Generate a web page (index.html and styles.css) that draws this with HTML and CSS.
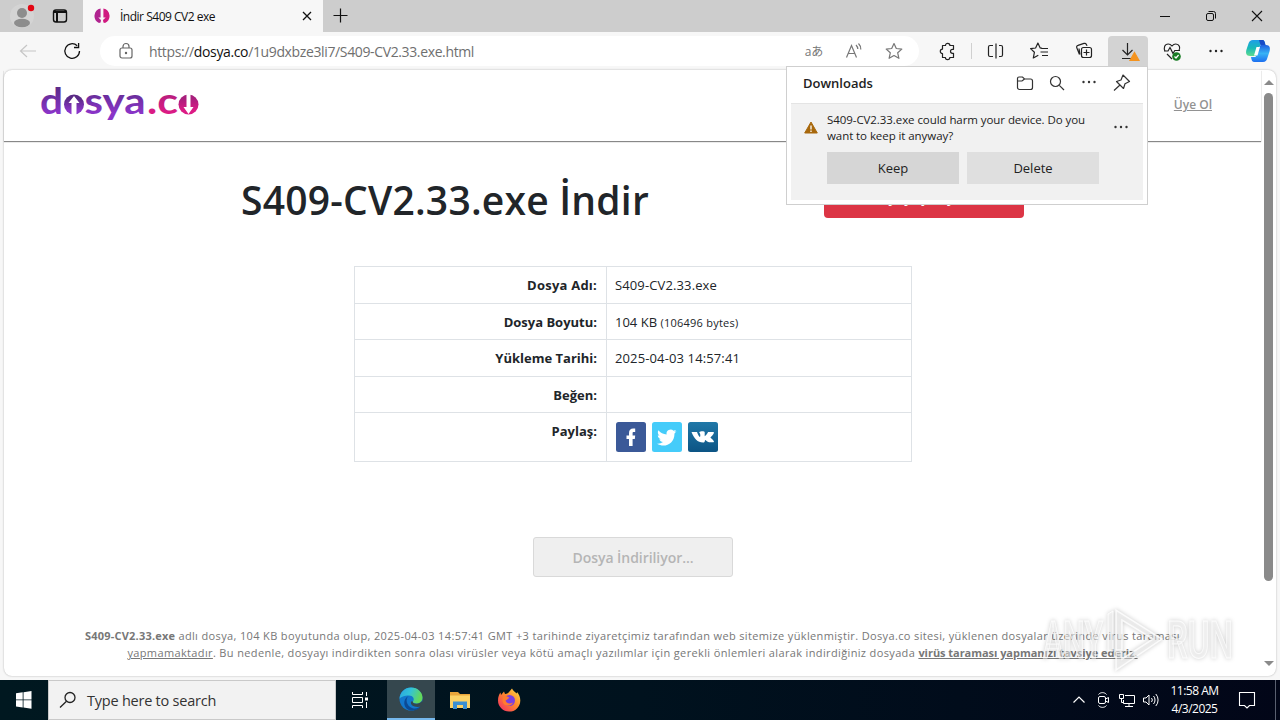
FILE: index.html
```html
<!DOCTYPE html>
<html lang="tr">
<head>
  <meta charset="UTF-8" />
  <title>İndir S409 CV2 exe</title>
  <link rel="stylesheet" href="styles.css">
</head>
<body>

  <div class="tab-bar">
    <div class="profile">
      <svg width="44" height="32" viewBox="0 0 44 32">
        <circle cx="22" cy="16" r="12" fill="#d4d4d4"/>
        <circle cx="22" cy="13" r="5" fill="#8d8d8d"/>
        <ellipse cx="22" cy="23" rx="8" ry="4.2" fill="#8d8d8d"/>
        <circle cx="31" cy="8" r="3.2" fill="#e30613"/>
      </svg>
      <svg width="32" height="32" viewBox="0 0 32 32" fill="none" stroke="#111" stroke-width="1.4">
        <rect x="9.5" y="10" width="13" height="12" rx="2.5"/>
        <path d="M9.5 12h13M13 13v9" stroke-width="2"/>
      </svg>
    </div>
    <div class="tab">
      <svg width="16" height="16" viewBox="0 0 16 16">
        <path d="M6.6 .6A7.6 7.6 0 0 0 5 15l1.6-.5L7 12 4.3 9.500H6.600z" fill="#b0238f"/>
        <path d="M9.400 .6A7.600 7.600 0 0 1 11 15l-1.600-.5L9 12l2.700-2.500H9.400z" fill="#d01a80"/>
      </svg>
      <span class="tab-title">İndir S409 CV2 exe</span>
      <svg width="12" height="12" viewBox="0 0 12 12" stroke="#111" stroke-width="1.3"><path d="M2 2l8 8M10 2l-8 8"/></svg>
    </div>
    <svg width="34" height="32" viewBox="0 0 34 32" stroke="#111" stroke-width="1.2"><path d="M10.500 15.500h14M17.500 8.500v14"/></svg>
    <div class="window-buttons">
      <svg width="46" height="32" viewBox="0 0 46 32" stroke="#111"><path d="M18 16.500h10"/></svg>
      <svg width="46" height="32" viewBox="0 0 46 32" fill="none" stroke="#111"><rect x="18.500" y="13.500" width="7" height="7" rx="1.500"/><path d="M20.500 11.500h5a2 2 0 0 1 2 2v5"/></svg>
      <svg width="46" height="32" viewBox="0 0 46 32" stroke="#111" stroke-width="1.1"><path d="M18 11l10 10M28 11l-10 10"/></svg>
    </div>
  </div>

  <div class="toolbar">
    <svg width="50" height="32" viewBox="0 0 50 32" fill="none" stroke="#c6c6c6" stroke-width="1.2"><path d="M36 16H21M27 10l-6.500 6 6.500 6"/></svg>
    <svg class="reload" width="44" height="32" viewBox="0 0 44 32" fill="none" stroke="#111" stroke-width="1.3"><path d="M29.500 16a7.300 7.300 0 1 1-2.300-5.300M28.600 8v4.500H24"/></svg>
    <div class="address">
      <svg width="16" height="18" viewBox="0 0 16 18" fill="none" stroke="#666" stroke-width="1.2"><rect x="2" y="6" width="12" height="10" rx="2"/><path d="M5 6V4.500a3 3 0 0 1 6 0V6"/><circle cx="8" cy="11" r=".6" fill="#666"/></svg>
      <span class="url">https://<b>dosya.co</b>/1u9dxbze3li7/S409-CV2.33.exe.html</span>
      <span class="translate">aあ</span>
      <svg width="40" height="30" viewBox="0 0 40 30" fill="none" stroke="#777" stroke-width="1.2"><path d="M12.500 21.500L17.500 9.500l5 12M14.300 17.500h6.500M22 9a6 6 0 0 1 1.800 4M24.500 7.500a8 8 0 0 1 2.300 6"/></svg>
      <svg width="40" height="30" viewBox="0 0 40 30" fill="none" stroke="#777" stroke-width="1.2" stroke-linejoin="round"><path d="M20 7.500l2.300 5 5.500.6-4.100 3.700 1.200 5.500-4.900-2.800-4.900 2.800 1.200-5.500-4.100-3.700 5.500-.6z"/></svg>
    </div>
    <div class="tools">
      <svg width="44" height="30" viewBox="0 0 44 30" fill="none" stroke="#222" stroke-width="1.2"><path d="M17.500 9.500h3a2.200 2.200 0 0 1 4.400 0h3.600v3.800h-1a2 2 0 0 0 0 4h1v4.200H24.800a2.200 2.200 0 0 1-4.400 0h-2.900v-4a2.200 2.200 0 0 1 0-4.400z" stroke-linejoin="round"/></svg>
      <span class="separator"></span>
      <svg width="44" height="30" viewBox="0 0 44 30" fill="none" stroke="#222" stroke-width="1.2"><path d="M19 9.500h-3a1.500 1.500 0 0 0-1.500 1.500v8a1.500 1.500 0 0 0 1.500 1.500h3M25 9.500h2a1.500 1.500 0 0 1 1.500 1.500v8a1.500 1.500 0 0 1-1.500 1.500h-2M22 7.500v15"/></svg>
      <svg width="44" height="30" viewBox="0 0 44 30" fill="none" stroke="#222" stroke-width="1.2" stroke-linejoin="round"><path d="M24 12.300l-1.800-.4-2.300-4.900-2.300 5-5 .6 3.800 3.700-1.100 5.700 5-2.800M23.500 12.500H30M22.500 16H30M24 19.500h6"/></svg>
      <svg width="44" height="30" viewBox="0 0 44 30" fill="none" stroke="#222" stroke-width="1.2"><rect x="19.500" y="11.500" width="10" height="10" rx="2"/><path d="M17.500 18.500l-2.700-6.800c-.5-1 .1-2 1.200-2.300l6-2c1-.3 2 .2 2.400 1l.6 1.500M17 12.500l1 6M24.500 13.500v6M21.500 16.500h6"/></svg>
      <span class="tool"><svg width="40" height="30" viewBox="0 0 40 30" fill="none" stroke="#222" stroke-width="1.2"><path d="M19.500 7v12M14.500 14l5 5 5-5M14 22.500h9"/><path d="M26.500 16.500l4.500 8h-9z" fill="#f4931e" stroke="#f4931e"/></svg></span>
      <svg width="44" height="30" viewBox="0 0 44 30" fill="none" stroke="#222" stroke-width="1.2"><path d="M15 15c-1.500-3-.5-7 3.200-7 2 0 3 1 3.800 2 .8-1 1.800-2 3.800-2 3.700 0 4.700 4 3.200 6.500M14 15h4l2-3.500 3 6 1.800-3H30M17 18l5 5"/><circle cx="26.500" cy="20.500" r="4.300" fill="#187c24" stroke="none"/><path d="M24.500 20.500l1.500 1.500 2.600-3" stroke="#fff"/></svg>
      <svg width="44" height="30" viewBox="0 0 44 30" fill="#222"><circle cx="16.500" cy="15" r="1.200"/><circle cx="22" cy="15" r="1.200"/><circle cx="27.500" cy="15" r="1.200"/></svg>
      <svg class="copilot" width="26" height="26" viewBox="0 0 26 26">
        <defs>
          <linearGradient id="cp1" x1="0" y1="0" x2="0" y2="1"><stop offset="0" stop-color="#1f9ee8"/><stop offset=".5" stop-color="#18b9b8"/><stop offset="1" stop-color="#5fdc8e"/></linearGradient>
          <linearGradient id="cp2" x1="0" y1="0" x2="0" y2="1"><stop offset="0" stop-color="#1f5fe0"/><stop offset=".5" stop-color="#37b3f5"/><stop offset="1" stop-color="#1d6ff0"/></linearGradient>
        </defs>
        <path d="M8 2h9c2.500 0 2.800 2 3.500 5l-5-.5L11 18H5c-4 0-4.500-3-3.500-6.500l2-6C4.300 3.300 5.500 2 8 2z" fill="url(#cp1)"/>
        <path d="M14 2h3c2.500 0 2.800 2 3.500 5h-5z" fill="#174ac7"/>
        <path d="M18 24H9.500c-2.500 0-3-2-3.500-5h4.500L15.500 7H21c4 0 4.500 3 3.500 6.500l-2.300 7C21.500 22.700 20.500 24 18 24z" fill="url(#cp2)"/>
        <path d="M11.500 9h3.500l-2.500 8.500H9z" fill="#fff"/>
      </svg>
    </div>
  </div>

  <div class="viewport">
    <div class="page">
      <div class="header">
        <svg class="logo" width="162" height="52" viewBox="0 0 162 52">
          <defs>
            <linearGradient id="lg" x1="0" y1="0" x2="0" y2="1"><stop offset="0.2" stop-color="#5a2a86"/><stop offset="0.8" stop-color="#8a35c8"/></linearGradient>
            <linearGradient id="lg2" x1="0" y1="0" x2="0" y2="1"><stop offset="0.2" stop-color="#a81f7c"/><stop offset="0.8" stop-color="#dc1b85"/></linearGradient>
          </defs>
          <text x="-1" y="36" textLength="23" lengthAdjust="spacingAndGlyphs" fill="url(#lg)">d</text>
          <circle cx="33" cy="26.500" r="10" fill="url(#lg)"/>
          <path d="M33 18l5.500 7h-3v12h-5V25h-3z" fill="#fff"/>
          <text x="43.500" y="36" textLength="61" lengthAdjust="spacingAndGlyphs" fill="url(#lg)">sya</text>
          <text x="106" y="36" textLength="31" lengthAdjust="spacingAndGlyphs" fill="url(#lg2)">.c</text>
          <circle cx="147.500" cy="26.500" r="10" fill="url(#lg2)"/>
          <path d="M147.500 36l-5-7h3V16h4v13h3z" fill="#fff"/>
        </svg>
        <a class="signup">Üye Ol</a>
      </div>

      <div class="title-row">
        <h1>S409-CV2.33.exe İndir</h1>
        <div class="report">Dosyayı Şikayet Et</div>
      </div>

      <table class="details">
        <tr><th class="s2">Dosya Adı:</th><td class="s1">S409-CV2.33.exe</td></tr>
        <tr><th>Dosya Boyutu:</th><td>104 KB <small>(106496 bytes)</small></td></tr>
        <tr><th>Yükleme Tarihi:</th><td class="s1">2025-04-03 14:57:41</td></tr>
        <tr><th>Beğen:</th><td></td></tr>
        <tr class="share">
          <th>Paylaş:</th>
          <td>
            <div class="social">
              <svg width="30" height="30" viewBox="0 0 30 30"><rect width="30" height="30" rx="2.500" fill="#3b5998"/><path d="M13 24v-7h-2.500v-3.500H13v-2.300C13 8 14.500 6.500 17.200 6.500h2v3.400h-1.400c-1 0-1.200.5-1.200 1.400v2.200h2.600L18.800 17h-2.200v7z" fill="#fff"/></svg>
              <svg width="30" height="30" viewBox="0 0 30 30"><rect width="30" height="30" rx="2.500" fill="#45ccfa"/><path d="M24.500 9.300l-2.200.6c.8-.5 1.300-1.200 1.600-2l-2.400.9a4.100 4.100 0 0 0-6.900 3.700c-3.300-.2-6.200-1.700-8.200-4.200-1.200 2.200-.4 4.300 1.200 5.400l-1.800-.5c0 2 1.400 3.600 3.200 4l-1.700.1c.5 1.600 2 2.700 3.700 2.800A8.500 8.500 0 0 1 5 21.800c7.500 4.500 17.500.5 17.500-10.300z" fill="#fff"/></svg>
              <svg width="30" height="30" viewBox="0 0 30 30"><defs><linearGradient id="vk" x1="0" y1="0" x2="0" y2="1"><stop offset="0" stop-color="#2078a8"/><stop offset="1" stop-color="#0c5484"/></linearGradient></defs><rect width="30" height="30" rx="2.500" fill="url(#vk)"/><path d="M3.500 10H9c.8 2.500 2 4.600 3 5 .6-.8.500-3.500-.8-4.500 1.200-1.500 5.300-1.400 5.500-.3v4c1.200-.5 2.600-2.500 3.400-4.200h5.300c1.500.4-.4 3.200-3 5.500 2.800 2.400 4.600 4.500 3 4.800h-4.400c-1.800-.3-2.700-2-3.700-2.300-.8.300 0 2.300-1.500 2.400C9.500 20.700 6.500 17 3.500 10z" fill="#fff"/></svg>
            </div>
          </td>
        </tr>
      </table>

      <div class="download-btn">Dosya İndiriliyor...</div>

      <div class="notice">
        <div><b>S409-CV2.33.exe</b> adlı dosya, 104 KB boyutunda olup, 2025-04-03 14:57:41 GMT +3 tarihinde ziyaretçimiz tarafından web sitemize yüklenmiştir. Dosya.co sitesi, yüklenen dosyalar üzerinde virus taraması</div>
        <div><u>yapmamaktadır</u>. Bu nedenle, dosyayı indirdikten sonra olası virüsler veya kötü amaçlı yazılımlar için gerekli önlemleri alarak indirdiğiniz dosyada <u class="advice">virüs taraması yapmanızı tavsiye ederiz.</u></div>
      </div>
    </div>
    <div class="scrollbar">
      <span class="arrow-up"></span>
      <span class="thumb"></span>
      <span class="arrow-down"></span>
    </div>
  </div>

  <div class="downloads">
    <div class="downloads-head">
      <span class="downloads-title">Downloads</span>
      <svg width="32" height="32" viewBox="0 0 32 32" fill="none" stroke="#333" stroke-width="1.2"><path d="M8.500 11.500a1.500 1.500 0 0 1 1.500-1.500h3.500l2 2h6a2 2 0 0 1 2 2v6.500a2 2 0 0 1-2 2h-11a2 2 0 0 1-2-2zM8.500 14H13l2.500-2"/></svg>
      <svg width="32" height="32" viewBox="0 0 32 32" fill="none" stroke="#333" stroke-width="1.2"><circle cx="14.500" cy="14.500" r="5"/><path d="M18.300 18.300L23 23"/></svg>
      <svg width="32" height="32" viewBox="0 0 32 32" fill="#333"><circle cx="10.500" cy="15" r="1.200"/><circle cx="16" cy="15" r="1.200"/><circle cx="21.500" cy="15" r="1.200"/></svg>
      <svg width="34" height="32" viewBox="0 0 34 32" fill="none" stroke="#333" stroke-width="1.200" stroke-linejoin="round"><path d="M18 8l6.500 6.500-4.500 2.200-1.500 4.800-7-7 4.500-1.500zM15 18l-6 5.500"/></svg>
    </div>
    <div class="downloads-item">
      <svg class="warn" width="14" height="13" viewBox="0 0 14 13"><path d="M7 1l6.300 11H.7z" fill="#a8680c" stroke="#a8680c" stroke-linejoin="round"/><path d="M7 4.500v4M7 9.500V11" stroke="#fff" stroke-width="1.3"/></svg>
      <div class="message">S409-CV2.33.exe could harm your device. Do you<br>want to keep it anyway?</div>
      <svg class="more" width="16" height="6" viewBox="0 0 16 6" fill="#333"><circle cx="2.500" cy="3" r="1.200"/><circle cx="8" cy="3" r="1.200"/><circle cx="13.500" cy="3" r="1.200"/></svg>
      <div class="choices"><span class="keep">Keep</span><span class="delete">Delete</span></div>
    </div>
  </div>

  <svg class="watermark" width="200" height="74" viewBox="0 0 200 74">
    <g fill="#fff" fill-opacity=".45" stroke="#fff" stroke-opacity=".8">
      <text x="5" y="54" textLength="60" lengthAdjust="spacingAndGlyphs">ANY</text>
      <text x="129" y="54" textLength="66" lengthAdjust="spacingAndGlyphs">RUN</text>
      <path d="M78 12V6l46 29-46 31V48h6v7l31-20-31-19v30h-6z" stroke-width="1.5"/>
      <path d="M70 10l5-3v40h-5z"/>
    </g>
  </svg>

  <div class="taskbar">
    <svg width="48" height="40" viewBox="0 0 48 40" fill="#fff"><path d="M16 13.200l6.700-.9v7.200H16zM23.500 12.200l8-1.100v8.400h-8zM16 20.300h6.700v7.200l-6.700-.9zM23.500 20.300h8v8.400l-8-1.100z"/></svg>
    <div class="search">
      <svg width="20" height="20" viewBox="0 0 20 20" fill="none" stroke="#222" stroke-width="1.3"><circle cx="11" cy="7.500" r="5"/><path d="M7.500 11.200L1 17.500"/></svg>
      <span class="search-text">Type here to search</span>
    </div>
    <svg width="51" height="40" viewBox="0 0 51 40" fill="none" stroke="#fff"><path d="M16.500 12v2.500h10V12M16.500 28v-2.500h10V28M16.500 17.500h10v5h-10zM30.500 12v4M30.500 22v6"/><rect x="29.500" y="18" width="2" height="2" fill="#fff"/></svg>
    <span class="task active">
      <svg width="24" height="24" viewBox="0 0 24 24">
        <defs><linearGradient id="eg" x1="0" y1="0" x2="1" y2=".3"><stop offset="0" stop-color="#2aa4e0"/><stop offset=".5" stop-color="#33c3d8"/><stop offset="1" stop-color="#63d95a"/></linearGradient></defs>
        <circle cx="12" cy="12" r="11.500" fill="#1377cc"/>
        <path d="M.5 12C1 5 6 .5 12 .5c7 0 11.500 5 11.500 10 0 4-3 6-6 6-2.500 0-4-1-3.500-2 2-2.500 0-6-4-6-4.500 0-8.500 1.500-9.500 3.500z" fill="url(#eg)"/>
        <path d="M9.500 9C6 12 7.500 19 13 21c3.500 1.200 6.500.2 9-2-2 3.500-6 5-10 4.500C4 22.500 3 12 9.500 9z" fill="#0c4a94"/>
        <path d="M14 14.500c-.8 1.200 1 2.300 3.500 2.200 2 0 4-.8 5.500-2.700l1 3.500-2 2c-6 1.500-11-1-10-5z" fill="#35474e"/>
      </svg>
    </span>
    <span class="task"><svg width="22" height="20" viewBox="0 0 22 20"><path d="M1 2h8l2 2h10v14H1z" fill="#e9a53a"/><path d="M1 5.500h20V18H1z" fill="#fcd266"/><path d="M4 19v-7.500h14V19h-4v-4H8v4z" fill="#3b8fd2"/><path d="M8 15h6v3H8z" fill="#fcd266"/></svg></span>
    <span class="task"><svg width="24" height="24" viewBox="0 0 24 24">
      <defs><linearGradient id="ff" x1="1" y1="0" x2="0" y2="1"><stop offset="0" stop-color="#ffe14a"/><stop offset=".45" stop-color="#ff8a2a"/><stop offset="1" stop-color="#f0256a"/></linearGradient></defs>
      <path d="M15 .5c1 2.500 3 3 4.500 5 .5-.5.600-1 .5-1.500 2 2 3.300 5 3.300 8.500A11.200 11.200 0 0 1 12 23.600 11.200 11.200 0 0 1 1 12.500C1 9 2 6.500 3.500 4.500L4 7l3-3.500L8 6c3 0 4.500-2.500 7-5.500z" fill="url(#ff)"/>
      <circle cx="12.500" cy="12.500" r="5.500" fill="#7a3fe0"/><path d="M6 8.500c3-1.500 5 0 6.500 1.500-2 .5-2 2-4 2.500 1 3.500 5 3.500 7.500 2-1 4-10 5-10.500-2z" fill="#ff7b2e"/>
    </svg></span>
    <div class="tray">
      <svg width="24" height="24" viewBox="0 0 24 24" fill="none" stroke="#fff" stroke-width="1.2"><path d="M6.500 14.500L12 9l5.500 5.500"/></svg>
      <svg width="24" height="24" viewBox="0 0 24 24" fill="none" stroke="#fff"><rect x="7.500" y="8.500" width="7" height="7" rx="1.500"/><path d="M14.500 11l3-1.500v5l-3-1.500M7.500 6.500c2-2.500 6-2.500 8 0M7.500 17.500c2 2.500 6 2.500 8 0"/></svg>
      <svg width="24" height="24" viewBox="0 0 24 24" fill="none" stroke="#fff"><path d="M10 7.500h9.500v8H8.500V12M14 15.500v3M10 18.500h8M4.500 6.500h4v4h-4zM6.500 10.500v4h2"/></svg>
      <svg width="24" height="24" viewBox="0 0 24 24" fill="none" stroke="#fff"><path d="M4.500 10h2.500l3-3v10l-3-3H4.500zM12.500 10a3 3 0 0 1 0 4M14.500 8a6 6 0 0 1 0 8M16.800 6a9 9 0 0 1 0 12"/></svg>
      <div class="clock">11:58 AM<br>4/3/2025</div>
      <svg width="48" height="40" viewBox="0 0 48 40" fill="none" stroke="#fff" stroke-width="1.1"><path d="M16.500 12.500h15v13h-5l-2.500 2.500-2.500-2.500h-5z"/></svg>
      <span class="show-desktop"></span>
    </div>
  </div>

</body>
</html>
```
FILE: styles.css
```css
* {
  box-sizing: border-box;
}
body {
  margin: 0;
  width: 1280px;
  height: 720px;
  overflow: hidden;
  display: flex;
  flex-direction: column;
  position: relative;
  background: #f7f7f7;
  font-family: "Open Sans", "Noto Sans", sans-serif;
  color: #212529;
}
svg {
  display: block;
  flex-shrink: 0;
}
.tab-bar {
  display: flex;
  height: 32px;
  background: #cdcdcd;
}
.profile {
  display: flex;
  width: 83px;
}
.tab {
  display: flex;
  align-items: center;
  width: 240px;
  padding: 0 10px 0 11px;
  background: #f7f7f7;
}
.tab-title {
  flex: 1;
  margin-left: 10px;
  font-size: 12px;
  letter-spacing: -0.49px;
  color: #111;
  white-space: nowrap;
}
.window-buttons {
  display: flex;
  margin-left: auto;
}
.toolbar {
  display: flex;
  align-items: center;
  height: 38px;
}
.reload {
  margin-right: 6px;
}
.address {
  display: flex;
  align-items: center;
  width: 819px;
  height: 30px;
  padding: 0 5px 0 18px;
  border-radius: 15px;
  background: #fff;
}
.url {
  flex: 1;
  margin-left: 15px;
  font-size: 14px;
  letter-spacing: -0.367px;
  color: #6f6f6f;
  white-space: nowrap;
}
.url b {
  font-weight: 400;
  color: #111;
}
.translate {
  width: 40px;
  text-align: center;
  font-family: "Open Sans", "Noto Sans CJK JP", sans-serif;
  font-size: 12px;
  color: #777;
}
.tools {
  display: flex;
  align-items: center;
  margin-left: 6px;
}
.separator {
  width: 1px;
  height: 16px;
  margin: 0 2px;
  background: #d0d0d0;
}
.tool {
  width: 40px;
  height: 30px;
  margin: 0 2px;
  border-radius: 4px 4px 0 0;
  background: #d3d3d3;
}
.copilot {
  margin-left: 7px;
}
.viewport {
  display: flex;
  width: 1272px;
  height: 606px;
  margin: 0 4px 4px;
  background: #fff;
  border-radius: 8px;
  box-shadow: 0 0 2px rgba(0, 0, 0, 0.3);
}
.page {
  width: 1257px;
}
.header {
  display: flex;
  justify-content: space-between;
  height: 71px;
  padding: 8px 49px 0 37px;
  box-shadow: 0 1px 1px #888;
}
.logo {
  font-family: Lato, sans-serif;
  font-weight: 700;
  font-size: 37px;
}
.signup {
  margin-top: 19px;
  font-size: 12px;
  font-weight: 600;
  line-height: 16px;
  color: #929292;
  text-decoration: underline;
}
.title-row {
  display: flex;
  justify-content: space-between;
  align-items: flex-end;
  height: 77px;
  margin: 0 237px 48px;
}
h1 {
  margin: 0;
  font-size: 39px;
  line-height: 36px;
  font-weight: 600;
  letter-spacing: 0.22px;
  white-space: nowrap;
}
.report {
  width: 200px;
  height: 38px;
  border-radius: 4px;
  background: #dc3545;
  color: #fff;
  font-size: 14px;
  font-weight: 600;
  line-height: 35px;
  text-align: center;
}
.details {
  width: 558px;
  margin: 0 auto 0 350px;
  border-collapse: collapse;
  table-layout: fixed;
  font-size: 13px;
  line-height: 18px;
}
.details th, .details td {
  height: 36.5px;
  padding: 0 8px;
  border: 1px solid #dee2e6;
  text-align: left;
  white-space: nowrap;
}
.details th {
  width: 252px;
  padding-right: 9px;
  text-align: right;
}
.details tr:nth-child(even) th, .details tr:nth-child(even) td {
  padding-top: 2px;
}
.details .s1 {
  letter-spacing: 0.125px;
}
.details .s2 {
  letter-spacing: 0.23px;
}
.details small {
  font-size: 11px;
  letter-spacing: 0.24px;
}
.details .share th {
  height: 49px;
  padding-top: 9px;
  vertical-align: top;
}
.social {
  display: flex;
  gap: 6px;
  margin-left: 1px;
}
.download-btn {
  width: 200px;
  height: 40px;
  margin: 75px 0 0 529px;
  border: 1px solid #d9d9d9;
  border-radius: 3px;
  background: #efefef;
  color: #b5b5b5;
  font-size: 14px;
  font-weight: 600;
  letter-spacing: -0.05px;
  line-height: 39px;
  text-align: center;
}
.notice {
  margin-top: 50px;
  font-size: 11px;
  letter-spacing: 0.36px;
  line-height: 17px;
  color: #777;
  text-align: center;
  white-space: nowrap;
}
.notice b {
  letter-spacing: 0.2px;
}
.notice .advice {
  font-weight: 700;
  letter-spacing: -0.04px;
}
.scrollbar {
  display: flex;
  flex-direction: column;
  align-items: center;
  width: 15px;
  padding: 10px 0;
}
.arrow-up, .arrow-down {
  border: 5px solid transparent;
}
.arrow-up {
  border-top: 0;
  border-bottom-color: #8a8a8a;
}
.arrow-down {
  margin-top: auto;
  border-bottom: 0;
  border-top-color: #8a8a8a;
}
.thumb {
  width: 9px;
  height: 488px;
  margin-top: 8px;
  border-radius: 5px;
  background: #8a8a8a;
}
.downloads {
  position: absolute;
  left: 786px;
  top: 66px;
  width: 362px;
  height: 139px;
  border: 1px solid #cfcfcf;
  background: #fff;
}
.downloads-head {
  display: flex;
  align-items: center;
  height: 36px;
  padding: 0 8px 4px 16px;
}
.downloads-title {
  flex: 1;
  font-size: 13px;
  font-weight: 600;
  color: #222;
}
.downloads-item {
  display: grid;
  grid-template-columns: 36px 286px 1fr;
  grid-template-rows: 48px 32px;
  height: 97px;
  margin: 0 4px;
  border-top: 1px solid #e4e4e4;
  background: #f1f1f1;
}
.warn {
  margin: 17px 0 0 13px;
}
.message {
  padding-top: 8px;
  font-size: 11.5px;
  letter-spacing: -0.07px;
  line-height: 16px;
  color: #222;
  white-space: nowrap;
}
.more {
  margin-top: 20px;
}
.choices {
  grid-column: 2 / 4;
  display: flex;
  gap: 8px;
  font-size: 13px;
  line-height: 32px;
  text-align: center;
  color: #222;
}
.keep, .delete {
  width: 132px;
}
.keep {
  background: #d6d6d6;
}
.delete {
  background: #dfdfdf;
}
.watermark {
  position: absolute;
  left: 1038px;
  top: 604px;
  font-family: Roboto, sans-serif;
  font-weight: 500;
  font-size: 51px;
  filter: drop-shadow(0 0 2px rgba(0, 0, 0, 0.3));
}
.taskbar {
  display: flex;
  height: 40px;
  background: linear-gradient(90deg, #001820, #00121e 50%, #020618);
}
.search {
  display: flex;
  align-items: center;
  width: 288px;
  padding-left: 10px;
  border: 1px solid #c9c9c9;
  background: #f2f2f2;
}
.search-text {
  margin-left: 8px;
  font-size: 14.5px;
  letter-spacing: -0.23px;
  color: #333;
}
.task {
  display: flex;
  align-items: center;
  justify-content: center;
  width: 49px;
}
.task.active {
  width: 48px;
  background: #35474e;
  border-bottom: 2px solid #76b9ed;
}
.tray {
  display: flex;
  align-items: center;
  margin-left: auto;
}
.clock {
  width: 60px;
  padding-left: 3px;
  font-size: 12px;
  letter-spacing: -0.5px;
  line-height: 18px;
  text-align: center;
  color: #fff;
  white-space: nowrap;
}
.show-desktop {
  width: 5px;
  height: 40px;
  margin-left: 4px;
  border-left: 1px solid #5a6070;
}
```
